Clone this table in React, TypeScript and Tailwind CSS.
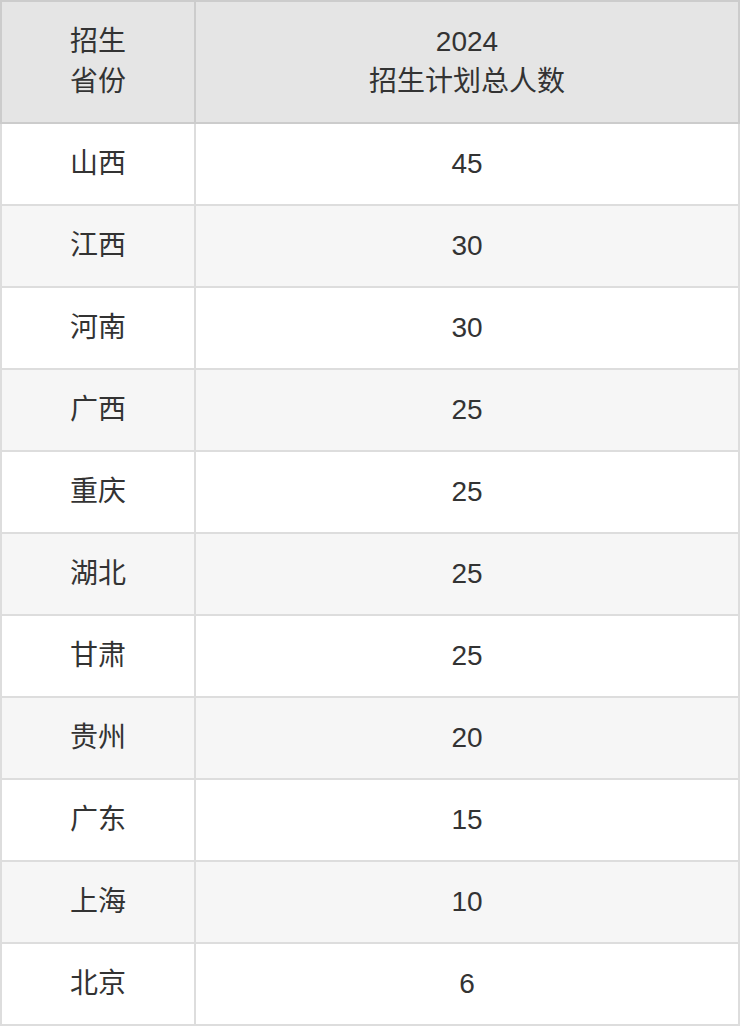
const rows: [string, string][] = [
  ["山西", "45"],
  ["江西", "30"],
  ["河南", "30"],
  ["广西", "25"],
  ["重庆", "25"],
  ["湖北", "25"],
  ["甘肃", "25"],
  ["贵州", "20"],
  ["广东", "15"],
  ["上海", "10"],
  ["北京", "6"],
];

const App = () => {
  return (
    <div
      className="w-[740px] bg-white text-[28px] leading-[40px] text-[#333]"
      style={{ fontFamily: '"Liberation Sans", "Noto Sans CJK SC", sans-serif' }}
    >
      <div className="flex h-[124px] border-y-2 border-[#cccccc] bg-[#e5e5e5]">
        <div className="flex w-[196px] flex-col items-center justify-center border-x-2 border-[#cccccc] text-center">
          <span>招生</span>
          <span>省份</span>
        </div>
        <div className="flex flex-1 flex-col items-center justify-center border-r-2 border-[#cccccc] text-center">
          <span>2024</span>
          <span>招生计划总人数</span>
        </div>
      </div>
      {rows.map(([province, count], i) => (
        <div
          key={province}
          className={`flex h-[82px] border-b-2 border-[#dddddd] ${
            i % 2 === 1 ? "bg-[#f6f6f6]" : "bg-white"
          }`}
        >
          <div className="flex w-[196px] items-center justify-center border-x-2 border-[#dddddd]">
            {province}
          </div>
          <div className="flex flex-1 items-center justify-center border-r-2 border-[#dddddd]">
            {count}
          </div>
        </div>
      ))}
    </div>
  );
};

export default App;
